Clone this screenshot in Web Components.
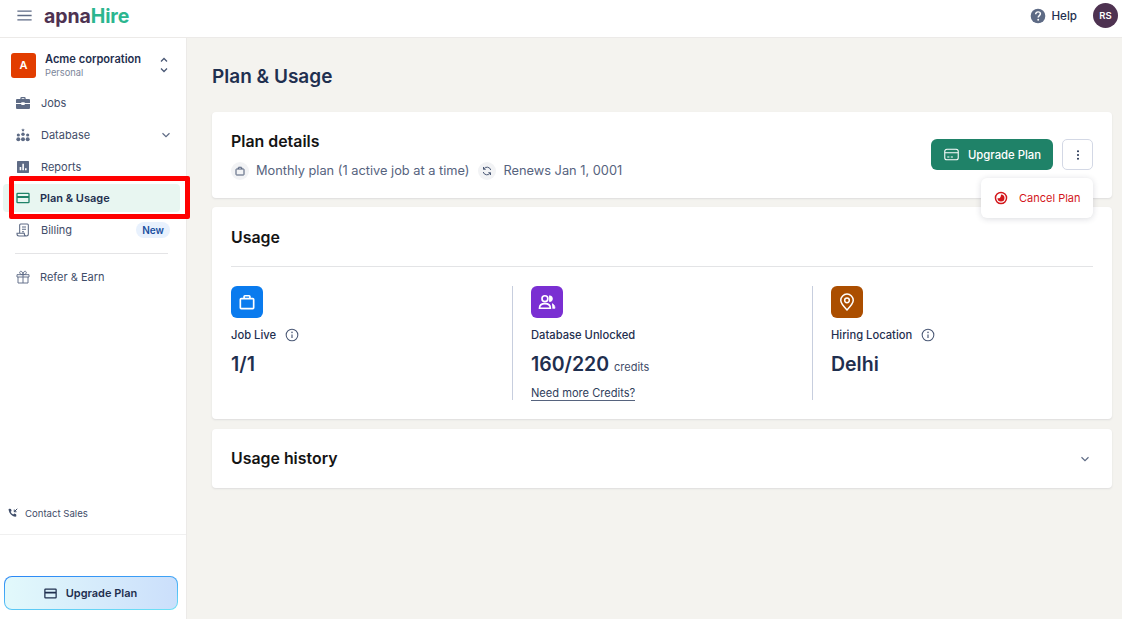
<!DOCTYPE html>
<html lang="en">
<head>
<meta charset="utf-8">
<title>Plan & Usage</title>
<style>
  html, body { margin: 0; height: 100%; }
  body { font-family: Inter, "Liberation Sans", sans-serif; background: #f4f3ef; overflow: hidden; }
</style>
</head>
<body>
<app-shell>
  <app-header slot="header"></app-header>
  <app-sidebar slot="sidebar"></app-sidebar>
  <plan-page></plan-page>
</app-shell>

<script>
// Shared icons, all drawn on a 24 box.
const icons = {
  menu: '<path d="M3 6.500h18M3 12h18M3 17.500h18" fill="none" stroke="currentColor" stroke-width="1.700"/>',
  up: '<path d="M6 15l6-6 6 6" fill="none" stroke="currentColor" stroke-width="2.600"/>',
  down: '<path d="M6 9l6 6 6-6" fill="none" stroke="currentColor" stroke-width="2"/>',
  downBold: '<path d="M6 9l6 6 6-6" fill="none" stroke="currentColor" stroke-width="2.600"/>',
  briefcaseSolid: '<path d="M8 6V5a2 2 0 0 1 2-2h4a2 2 0 0 1 2 2v1h5a1.500 1.500 0 0 1 1.500 1.500V12h-8v-1h-5v1h-8V7.500A1.500 1.500 0 0 1 3 6zm2 0h4V5h-4z" fill="currentColor"/><path d="M1.500 13.500h8V15h5v-1.500h8V19.500A1.500 1.500 0 0 1 21 21H3a1.500 1.500 0 0 1-1.500-1.500z" fill="currentColor"/>',
  people: '<path d="M12 2l.8 1.700 1.800.2-1.300 1.200.3 1.800-1.600-.9-1.600.9.3-1.800-1.300-1.200 1.800-.2z" fill="currentColor"/><circle cx="12" cy="11" r="2.600" fill="currentColor"/><circle cx="5" cy="12" r="2.400" fill="currentColor"/><circle cx="19" cy="12" r="2.400" fill="currentColor"/><circle cx="12" cy="18.500" r="3" fill="currentColor"/><circle cx="5" cy="18.500" r="3" fill="currentColor"/><circle cx="19" cy="18.500" r="3" fill="currentColor"/>',
  chart: '<path fill-rule="evenodd" d="M4 3h16a1 1 0 0 1 1 1v16a1 1 0 0 1-1 1H4a1 1 0 0 1-1-1V4a1 1 0 0 1 1-1zm3 9v5h2.400v-5zm4-5v10h2.400V7zm4 7v3h2.400v-3z" fill="currentColor"/>',
  card: '<path fill-rule="evenodd" d="M4 4h16a2 2 0 0 1 2 2v12a2 2 0 0 1-2 2H4a2 2 0 0 1-2-2V6a2 2 0 0 1 2-2zm0 2v3h16V6zm0 6v6h16v-6z" fill="currentColor"/>',
  bill: '<path d="M7 17V4.500A1.500 1.500 0 0 1 8.500 3h10A1.500 1.500 0 0 1 20 4.500V18a3 3 0 0 1-3 3H6a3 3 0 0 1-3-3v-1h11v1a3 3 0 0 0 3 3M10.500 7.500h6M10.500 11h6M10.500 14.500h3" fill="none" stroke="currentColor" stroke-width="1.600"/>',
  gift: '<path d="M3 8.500h18V12H3zM4.500 12v9h15v-9M12 8.500V21M12 8.500C10 8.500 7 8 7 5.500 7 3.500 9 2.800 10.300 4 11.500 5.100 12 7 12 8.500zm0 0c2 0 5-.5 5-3 0-2-2-2.700-3.300-1.500C12.500 5.100 12 7 12 8.500z" fill="none" stroke="currentColor" stroke-width="1.400"/>',
  phone: '<path d="M5 3.500l3 .5 1.200 4-2 1.500c1 2.400 3 4.500 5.500 5.700l1.700-2 3.800 1.300.5 3.200c.1 1-.8 2-2 1.800C9.800 18.500 4.500 13 3.200 5.400 3 4.400 4 3.400 5 3.500z" fill="currentColor"/><path d="M20.500 3.500l-6 6M14.500 5v4.500H19" fill="none" stroke="currentColor" stroke-width="2"/>',
  help: '<circle cx="12" cy="12" r="11" fill="currentColor"/><path d="M8.500 9.200C8.500 7 10.200 5.800 12.100 5.800c2 0 3.500 1.200 3.500 3 0 2.600-3.300 2.700-3.300 5.400" fill="none" stroke="#fff" stroke-width="2.200"/><circle cx="12.300" cy="17.600" r="1.400" fill="#fff"/>',
  bag: '<path d="M5 8h14a1 1 0 0 1 1 1v10a1 1 0 0 1-1 1H5a1 1 0 0 1-1-1V9a1 1 0 0 1 1-1zM8.500 8V5.500a1 1 0 0 1 1-1h5a1 1 0 0 1 1 1V8" fill="none" stroke="currentColor" stroke-width="2"/>',
  renew: '<path d="M19.500 10A7.700 7.700 0 0 0 5.500 8M4.500 14a7.700 7.700 0 0 0 14 2" fill="none" stroke="currentColor" stroke-width="2"/><path d="M5 4v4.500h4.500M19 20v-4.500h-4.500" fill="none" stroke="currentColor" stroke-width="2"/>',
  cardOutline: '<rect x="2.500" y="4.500" width="19" height="15" rx="3" fill="none" stroke="currentColor" stroke-width="1.500"/><path d="M2.500 9.500h19M6 15.500h3M11 15.500h3" fill="none" stroke="currentColor" stroke-width="1.500"/>',
  dots: '<circle cx="12" cy="5.500" r="1.700" fill="currentColor"/><circle cx="12" cy="12" r="1.700" fill="currentColor"/><circle cx="12" cy="18.500" r="1.700" fill="currentColor"/>',
  cancel: '<circle cx="12" cy="12" r="9.500" fill="none" stroke="currentColor" stroke-width="2.500"/><path d="M12 6a6 6 0 1 1-6 6c2 1.500 6 .5 6-6z" fill="currentColor"/>',
  info: '<circle cx="12" cy="12" r="10" fill="none" stroke="currentColor" stroke-width="1.800"/><path d="M12 11v6" stroke="currentColor" stroke-width="2"/><circle cx="12" cy="7.500" r="1.300" fill="currentColor"/>',
  users: '<circle cx="9.500" cy="8" r="3.500" fill="none" stroke="currentColor" stroke-width="2"/><path d="M3 19.500c0-3.500 2.500-5.500 6.500-5.500s6.500 2 6.500 5.500z" fill="none" stroke="currentColor" stroke-width="2"/><path d="M15 4.500a3.500 3.500 0 0 1 0 7zM18 14c2 .7 3.500 2.500 3.500 5.500H18.500" fill="currentColor" stroke="currentColor"/>',
  pin: '<path d="M12 21.500c-4.500-4.500-7.500-7.700-7.500-11.500a7.500 7.500 0 0 1 15 0c0 3.800-3 7-7.500 11.500z" fill="none" stroke="currentColor" stroke-width="1.800"/><circle cx="12" cy="10" r="2.800" fill="none" stroke="currentColor" stroke-width="1.800"/>'
};

function icon(name, size) {
  return `<svg width="${size}" height="${size}" viewBox="0 0 24 24" aria-hidden="true">${icons[name]}</svg>`;
}

// Page frame: header on top, sidebar and scroll area below.
class AppShell extends HTMLElement {
  constructor() {
    super();
    this.attachShadow({ mode: 'open' });
    this.shadowRoot.innerHTML = `
      <style>
        :host { display: grid; grid-template-rows: 38px 1fr; grid-template-columns: 187px 1fr; height: 619px; }
        ::slotted([slot=header]) { grid-column: 1 / 3; }
        main { min-width: 0; }
      </style>
      <slot name="header"></slot>
      <slot name="sidebar"></slot>
      <main><slot></slot></main>
    `;
  }
}
customElements.define('app-shell', AppShell);

class AppHeader extends HTMLElement {
  constructor() {
    super();
    this.attachShadow({ mode: 'open' });
    this.shadowRoot.innerHTML = `
      <style>
        :host { display: flex; align-items: center; box-sizing: border-box; height: 38px; background: #fff; border-bottom: 1px solid #eceae8; padding: 0 4px 6px 15px; position: relative; }
        .menu { color: #5e6b85; display: flex; margin-right: 10px; }
        .logo { font-size: 19.500px; font-weight: 700; letter-spacing: -.1px; color: #4e3251; line-height: 24px; }
        .logo span { color: #2bb68f; }
        .help { margin-left: auto; display: flex; align-items: center; gap: 5px; font-size: 11.600px; font-weight: 500; color: #1f2f4f; margin-right: 16px; }
        .help svg { color: #5e6b85; }
        .avatar { width: 25px; height: 25px; border-radius: 50%; background: #4e3251; color: #fff; font-size: 9.500px; font-weight: 600; display: flex; align-items: center; justify-content: center; }
      </style>
      <div class="menu">${icon('menu', 19)}</div>
      <div class="logo">apna<span>Hire</span></div>
      <div class="help">${icon('help', 16)}Help</div>
      <div class="avatar">RS</div>
    `;
  }
}
customElements.define('app-header', AppHeader);

// One row of the left navigation.
class NavItem extends HTMLElement {
  constructor() {
    super();
    this.attachShadow({ mode: 'open' });
  }
  connectedCallback() {
    const active = this.hasAttribute('active');
    const tight = active || this.hasAttribute('tight');
    this.shadowRoot.innerHTML = `
      <style>
        :host { display: flex; align-items: center; height: 31.750px; box-sizing: border-box; font-size: 11px; color: #3f4d69; }
        .row { flex: 1; display: flex; align-items: center; height: 28px; margin: 0 6px 0 3px; padding: 0 9px 0 12px; border-radius: 4px; ${active ? 'background: #e8f6f1; color: #1f2f4f; font-weight: 600;' : ''} }
        .icon { display: flex; width: 16px; margin-right: ${tight ? 9 : 10}px; color: ${active ? '#1f8268' : '#5e6b85'}; }
        .end { margin-left: auto; display: flex; color: #5e6b85; }
      </style>
      <div class="row">
        <span class="icon">${icon(this.getAttribute('icon'), 16)}</span>
        <slot></slot>
        <span class="end"><slot name="end"></slot></span>
      </div>
    `;
  }
}
customElements.define('nav-item', NavItem);

class AppSidebar extends HTMLElement {
  constructor() {
    super();
    this.attachShadow({ mode: 'open' });
    this.shadowRoot.innerHTML = `
      <style>
        :host { display: flex; flex-direction: column; background: #fff; box-sizing: border-box; border-right: 1px solid #eceae8; position: relative; }
        .account { display: flex; align-items: center; padding: 9px 0 0 11px; height: 36px; margin-bottom: 4.250px; }
        .badge { width: 25px; height: 25px; border-radius: 3px; background: #e23d00; color: #fff; font-size: 11px; font-weight: 600; display: flex; align-items: center; justify-content: center; margin-right: 9px; }
        .name { font-size: 11.100px; font-weight: 600; color: #1f2f4f; line-height: 14px; }
        .sub { font-size: 9.300px; color: #7b8699; line-height: 13px; }
        .switch { margin-left: auto; margin-right: 16px; display: flex; flex-direction: column; color: #4a5875; }
        .switch svg { margin: -1px 0; }
        .chev { display: flex; margin-right: -2px; }
        .new { font-size: 10px; font-weight: 600; color: #1a4fa0; background: #e8f1fd; padding: 2px 6px; border-radius: 9px; line-height: 12px; margin-right: 1px; }
        hr { border: 0; border-top: 1px solid #e4e4e6; margin: 7px 18px 7px 15px; }
        .grow { flex: 1; }
        .contact { display: flex; align-items: center; gap: 6px; font-size: 9.600px; color: #3f4d69; padding: 0 0 15px 7px; }
        .rule { border-top: 1.500px solid #f0f0f0; }
        .foot { height: 84px; box-sizing: border-box; padding: 41px 8px 9px 4px; }
        .upgrade { height: 34px; box-sizing: border-box; border-radius: 8px; display: flex; align-items: center; justify-content: center; gap: 8px; padding-right: 2px; font-size: 11px; font-weight: 600; color: #1f2f4f;
          background: linear-gradient(90deg, #e2f9fb, #cbdffb) padding-box, linear-gradient(175deg, #2a86f5 0%, #6fe3f5 100%) border-box; border: 1.500px solid transparent; }
        .mark { position: absolute; left: 9px; top: 138px; width: 181px; height: 43px; box-sizing: border-box; border: 5px solid #f00; border-radius: 2px; z-index: 2; }
      </style>
      <div class="account">
        <div class="badge">A</div>
        <div><div class="name">Acme corporation</div><div class="sub">Personal</div></div>
        <div class="switch">${icon('up', 12)}${icon('downBold', 12)}</div>
      </div>
      <nav-item icon="briefcaseSolid">Jobs</nav-item>
      <nav-item icon="people">Database<span class="chev" slot="end">${icon('down', 14)}</span></nav-item>
      <nav-item icon="chart">Reports</nav-item>
      <nav-item icon="card" active>Plan &amp; Usage</nav-item>
      <nav-item icon="bill">Billing<span class="new" slot="end">New</span></nav-item>
      <hr>
      <nav-item icon="gift" tight>Refer &amp; Earn</nav-item>
      <div class="grow"></div>
      <div class="contact">${icon('phone', 12)}Contact Sales</div>
      <div class="rule"></div>
      <div class="foot"><div class="upgrade">${icon('card', 15)}Upgrade Plan</div></div>
      <div class="mark"></div>
    `;
  }
}
customElements.define('app-sidebar', AppSidebar);

class PlanCard extends HTMLElement {
  constructor() {
    super();
    this.attachShadow({ mode: 'open' });
    this.shadowRoot.innerHTML = `
      <style>
        :host { display: block; background: #fff; border-radius: 4px; box-shadow: 0 1px 2px rgba(30,40,60,.10); padding: 0 19px; position: relative; }
      </style>
      <slot></slot>
    `;
  }
}
customElements.define('plan-card', PlanCard);

// One column in the usage card.
class UsageStat extends HTMLElement {
  constructor() {
    super();
    this.attachShadow({ mode: 'open' });
  }
  connectedCallback() {
    const hasInfo = this.hasAttribute('info');
    this.shadowRoot.innerHTML = `
      <style>
        :host { display: block; height: 114px; box-sizing: border-box; }
        .tile { width: 32px; height: 32px; border-radius: 6px; display: flex; align-items: center; justify-content: center; color: #fff; background: ${this.getAttribute('color')}; }
        .label { display: flex; align-items: center; gap: 9px; margin-top: 8px; height: 18px; font-size: 11.200px; font-weight: 500; color: #1f2f4f; }
        .label svg { color: #4a5875; }
        .value { margin-top: 8px; font-size: 19.500px; font-weight: 600; line-height: 24px; color: #1f2f4f; }
        ::slotted(small) { font-size: 11px; font-weight: 400; color: #3f4d69; }
      </style>
      <div class="tile">${icon(this.getAttribute('icon'), 20)}</div>
      <div class="label">${this.getAttribute('label')}${hasInfo ? icon('info', 14) : ''}</div>
      <div class="value"><slot></slot></div>
      <slot name="extra"></slot>
    `;
  }
}
customElements.define('usage-stat', UsageStat);

class PlanPage extends HTMLElement {
  constructor() {
    super();
    this.attachShadow({ mode: 'open' });
    this.shadowRoot.innerHTML = `
      <style>
        :host { display: block; padding: 0 10px 0 25px; }
        h1 { margin: 0; padding: 27px 0 23px; font-size: 19px; line-height: 24px; font-weight: 600; color: #1f2f4f; }
        h2 { margin: 0; font-size: 15.900px; line-height: 20px; font-weight: 600; color: #141414; }
        plan-card + plan-card { margin-top: 9px; }
        plan-card.last { margin-top: 10px; }
        .details { display: flex; align-items: center; height: 86px; }
        .info { margin-top: 2px; }
        .details h2 { margin-bottom: 10px; }
        .meta { display: flex; align-items: center; font-size: 12.800px; color: #56637e; line-height: 18px; }
        .dot { width: 18px; height: 18px; border-radius: 50%; background: #f2f3f5; color: #4a5875; display: flex; align-items: center; justify-content: center; margin-right: 7px; }
        .meta .dot ~ .dot { margin-left: 9px; }
        .actions { margin-left: auto; display: flex; gap: 9px; margin-top: -1px; }
        .btn { width: 122px; height: 31px; border-radius: 6px; background: #1f8268; color: #fff; font-size: 11.300px; font-weight: 500; display: flex; align-items: center; justify-content: center; gap: 8px; }
        .kebab { width: 31px; height: 31px; box-sizing: border-box; border: 1px solid #d3d8e5; border-radius: 5px; display: flex; align-items: center; justify-content: center; color: #1f2f4f; }
        .pop { position: absolute; left: 769px; top: 66px; width: 112px; height: 40px; background: #fff; border-radius: 6px; box-shadow: 0 1px 6px rgba(30,40,60,.16); display: flex; align-items: center; gap: 11px; padding-left: 13px; box-sizing: border-box; color: #d3161b; font-size: 11px; z-index: 2; }
        .usage-head { height: 60px; box-sizing: border-box; padding-top: 21px; border-bottom: 1px solid #e3e4e6; }
        .stats { display: grid; grid-template-columns: 281px 300px 281px; padding: 19px 0 19px; }
        usage-stat + usage-stat { border-left: 1px solid #c7cede; padding-left: 18px; }
        .link { display: inline-block; margin-top: 8px; font-size: 11.100px; line-height: 13px; color: #2f3e5c; border-bottom: 1px solid #56637e; }
        .history { display: flex; align-items: center; justify-content: space-between; height: 59px; }
        .history svg { color: #5e6b85; margin-right: 1px; }
      </style>
      <h1>Plan &amp; Usage</h1>
      <plan-card>
        <div class="details">
          <div class="info">
            <h2>Plan details</h2>
            <div class="meta">
              <span class="dot">${icon('bag', 12)}</span>Monthly plan (1 active job at a time)
              <span class="dot">${icon('renew', 12)}</span>Renews Jan 1, 0001
            </div>
          </div>
          <div class="actions">
            <div class="btn">${icon('cardOutline', 17)}Upgrade Plan</div>
            <div class="kebab">${icon('dots', 14)}</div>
          </div>
        </div>
        <div class="pop">${icon('cancel', 14)}Cancel Plan</div>
      </plan-card>
      <plan-card>
        <div class="usage-head"><h2>Usage</h2></div>
        <div class="stats">
          <usage-stat label="Job Live" icon="bag" color="#0a7bee" info>1/1</usage-stat>
          <usage-stat label="Database Unlocked" icon="users" color="#7a2fd2">160/220 <small>credits</small>
            <span class="link" slot="extra">Need more Credits?</span></usage-stat>
          <usage-stat label="Hiring Location" icon="pin" color="#ab4e00" info>Delhi</usage-stat>
        </div>
      </plan-card>
      <plan-card class="last">
        <div class="history"><h2>Usage history</h2>${icon('down', 14)}</div>
      </plan-card>
    `;
  }
}
customElements.define('plan-page', PlanPage);
</script>
</body>
</html>
